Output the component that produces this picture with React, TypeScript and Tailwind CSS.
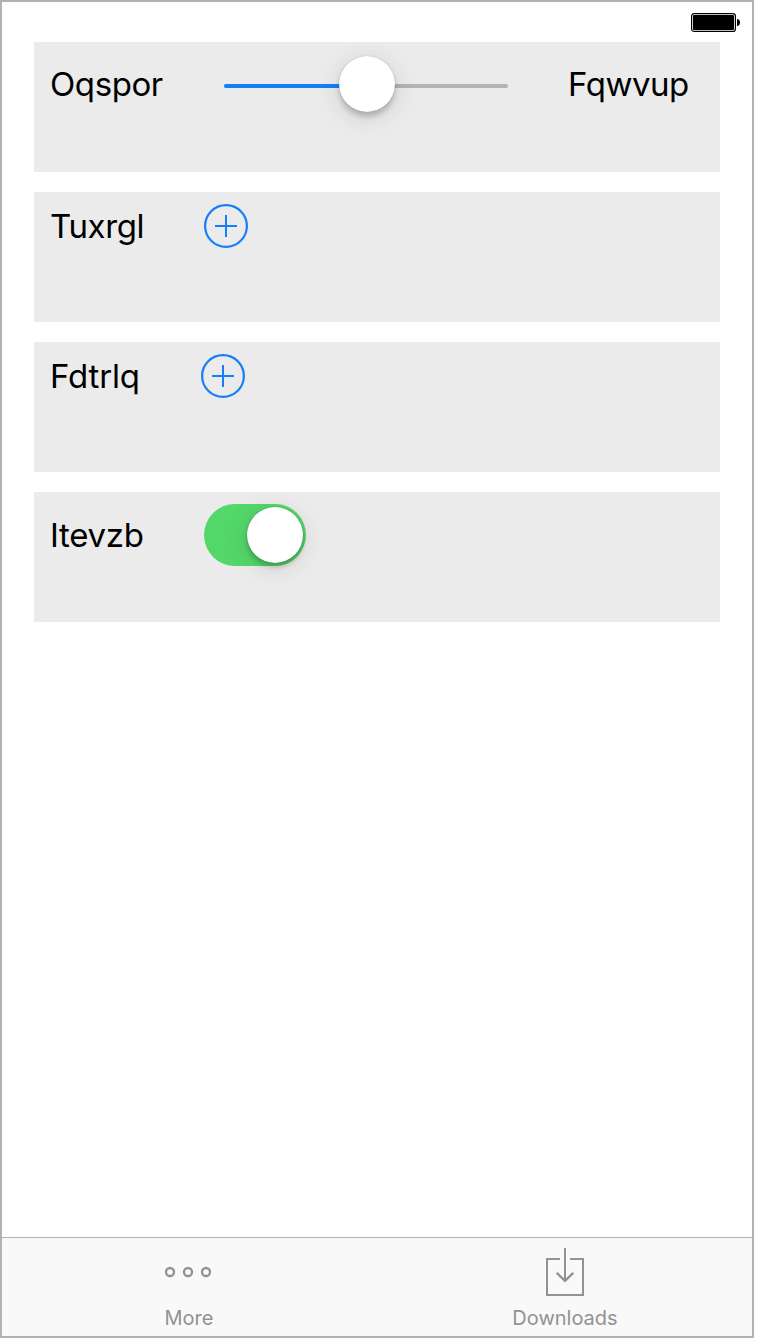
import type { ReactNode } from "react";

function Panel({ children }: { children: ReactNode }) {
  return <section className="flex h-[130px] w-[686px] shrink-0 items-start bg-[#ebebeb] pl-4">{children}</section>;
}

function AddButton() {
  return (
    <button type="button" aria-label="Add" className="mt-3 size-11 shrink-0">
      <svg width="44" height="44" viewBox="0 0 44 44" fill="none" stroke="#147efb" strokeWidth="2">
        <circle cx="22" cy="22" r="20.9" strokeWidth="2.2" />
        <path d="M11 22H33M22 11V33" />
      </svg>
    </button>
  );
}

function Slider() {
  return (
    <div className="relative mt-[42px] flex h-1 w-[284px] shrink-0 overflow-visible rounded-full bg-[#b4b4b4]">
      <div className="h-1 w-1/2 rounded-l-full bg-[#147efb]" />
      <div className="absolute -top-7 left-[115px] size-14 rounded-full bg-white shadow-[0_0_1px_rgba(0,0,0,0.35),0_5px_5px_rgba(0,0,0,0.18),0_5px_26px_rgba(0,0,0,0.13)]" />
    </div>
  );
}

function Toggle() {
  return (
    <div className="mt-3 flex h-[62px] w-[102px] shrink-0 items-center justify-end rounded-full bg-[#53d769] pr-[3px]">
      <div className="size-14 rounded-full bg-white shadow-[0_0_1px_rgba(0,0,0,0.4),0_4px_5px_rgba(0,0,0,0.2),0_4px_24px_rgba(0,0,0,0.12)]" />
    </div>
  );
}

function Battery() {
  return (
    <svg width="49" height="19" viewBox="0 0 49 19">
      <rect x="0.6" y="0.6" width="43.8" height="17.8" rx="2.5" fill="none" stroke="#000" strokeWidth="1.2" />
      <rect x="2" y="2" width="41" height="15" rx="1" />
      <path d="M46 6C48 6 49 7.5 49 9.5S48 13 46 13Z" />
    </svg>
  );
}

export default function App() {
  return (
    <div className="h-[1340px] w-[760px] bg-white font-['Inter',sans-serif] text-black">
      <main className="flex h-[1338px] w-[754px] flex-col border-2 border-[#b2b2b2] bg-white">
        <header className="flex h-10 shrink-0 justify-end pt-[11px] pr-3">
          <Battery />
        </header>
        <div className="flex flex-1 flex-col gap-5 pl-8">
          <Panel>
            <span className="mt-[22px] w-[174px] text-[33px] leading-10 tracking-[-0.4px]">Oqspor</span>
            <Slider />
            <span className="mt-[22px] ml-[60px] text-[33px] leading-10 tracking-[-0.5px]">Fqwvup</span>
          </Panel>
          <Panel>
            <span className="mt-[14px] w-[154px] text-[33px] leading-10 tracking-[-0.4px]">Tuxrgl</span>
            <AddButton />
          </Panel>
          <Panel>
            <span className="mt-[14px] w-[151px] text-[33px] leading-10 tracking-[-0.15px]">Fdtrlq</span>
            <AddButton />
          </Panel>
          <Panel>
            <span className="mt-[23px] w-[154px] text-[33px] leading-10 tracking-[-0.3px]">Itevzb</span>
            <Toggle />
          </Panel>
        </div>
        <nav className="flex h-[99px] shrink-0 border-t border-[#b2b2b2] bg-[#f9f9f9] text-xl leading-6 text-[#929292]">
          <button type="button" className="flex w-[374px] flex-col items-center pt-[10px]">
            <svg width="48" height="48" viewBox="0 0 48 48" fill="none" stroke="currentColor" strokeWidth="2.3">
              <circle cx="5" cy="24" r="4" />
              <circle cx="23" cy="24" r="4" />
              <circle cx="41" cy="24" r="4" />
            </svg>
            <span className="mt-[10px]">More</span>
          </button>
          <button type="button" className="flex w-[376px] flex-col items-center pt-[10px] pl-[2px]">
            <svg width="38" height="48" viewBox="0 0 38 48" fill="none" stroke="currentColor" strokeWidth="2">
              <path d="M14 11H1V47H37V11H24M19 0V33" />
              <path d="M10.7 24.8L19 32.8L27.3 24.8" strokeWidth="2.3" />
            </svg>
            <span className="mt-[10px]">Downloads</span>
          </button>
        </nav>
      </main>
    </div>
  );
}
